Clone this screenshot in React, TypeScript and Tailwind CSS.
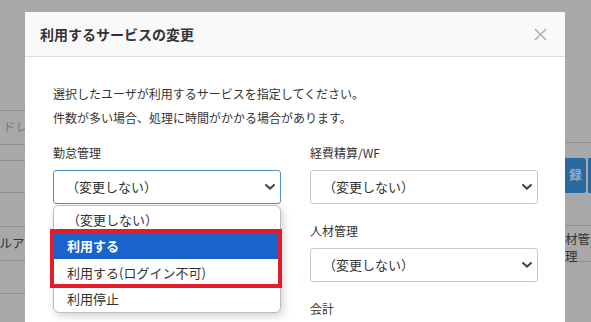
import React from "react";

const font = { fontFamily: '"Noto Sans CJK JP", "Noto Sans", sans-serif' };

function Chevron() {
  return (
    <svg width="10" height="6" viewBox="0 0 10 6" className="text-[#444]">
      <path d="M1 1l4 3.6L9 1" fill="none" stroke="currentColor" strokeWidth="2" strokeLinecap="round" />
    </svg>
  );
}

function Select({ focused = false }: { focused?: boolean }) {
  return (
    <div
      className={`flex h-[34px] items-center justify-between rounded-[3px] border bg-white pl-[12px] pr-[5px] text-[13px] text-[#333] ${
        focused ? "border-[#4e93c9]" : "border-[#c8c8c8]"
      }`}
    >
      <span>（変更しない）</span>
      <Chevron />
    </div>
  );
}

function Field({ label, focused, children }: { label: string; focused?: boolean; children?: React.ReactNode }) {
  return (
    <div className="relative">
      <div className="mb-[8px] h-[18px] text-[12px] leading-[18px] text-[#333]">{label}</div>
      <div className="relative">
        <Select focused={focused} />
        {children}
      </div>
    </div>
  );
}

function Dropdown() {
  const items = ["（変更しない）", "利用する", "利用する(ログイン不可)", "利用停止"];
  return (
    <div className="absolute left-0 right-0 top-full z-10 mt-[1px]">
      <div className="overflow-hidden rounded-[6px] border border-[#bdbdbd] bg-white shadow-[2px_3px_8px_rgba(0,0,0,0.18)]">
        {items.map((t, i) => (
          <div
            key={t}
            className={`flex h-[26.5px] items-center pl-[13px] text-[13px] ${
              i === 1 ? "bg-[#1a62cc] font-bold text-white" : "text-[#333]"
            }`}
          >
            {t}
          </div>
        ))}
      </div>
      <div className="absolute left-[-3px] top-[24px] h-[59px] w-[232px] border-[4px] border-[#e51d2b]" />
    </div>
  );
}

export default function App() {
  return (
    <div style={font} className="flex h-[322px] w-[591px] overflow-hidden bg-[#a8a8a8]">
      {/* page behind, left */}
      <div className="w-[25px] shrink-0 overflow-hidden pt-[110px] text-[12.5px]">
        <div className="flex h-[35px] items-center whitespace-nowrap border-y border-[#8e8e8e] pl-[3px] text-[#7a7a7a]">ドレ</div>
        <div className="h-[15px]" />
        <div className="h-[33px] border-y border-[#8e8e8e]" />
        <div className="h-[33px]" />
        <div className="flex h-[35px] items-center whitespace-nowrap border-y border-[#8e8e8e] text-[#333]">
          <span className="ml-[-13px]">ールア</span>
        </div>
        <div className="h-[33px] border-b border-[#8e8e8e]" />
      </div>

      {/* modal */}
      <div className="mt-[12px] w-[540px] shrink-0 bg-white">
        <div className="flex h-[45px] items-center justify-between border-b border-[#dcdcdc] bg-[#f9f9f9] pl-[15px] pr-[18px]">
          <span className="text-[14px] font-bold text-[#333]">利用するサービスの変更</span>
          <svg width="13" height="13" viewBox="0 0 13 13">
            <path d="M1 1l11 11M12 1L1 12" stroke="#b0b0b0" strokeWidth="1.6" />
          </svg>
        </div>
        <div className="pl-[28px] pr-[27px] pt-[25px]">
          <p className="text-[12px] leading-[24px] text-[#333]">選択したユーザが利用するサービスを指定してください。</p>
          <p className="text-[12px] leading-[24px] text-[#333]">件数が多い場合、処理に時間がかかる場合があります。</p>
          <div className="mt-[14px] grid grid-cols-2 gap-x-[29px] gap-y-[18px]">
            <Field label="勤怠管理" focused>
              <Dropdown />
            </Field>
            <Field label="経費精算/WF" />
            <Field label="給与計算" />
            <Field label="人材管理" />
            <div />
            <Field label="会計" />
          </div>
        </div>
      </div>

      {/* page behind, right */}
      <div className="w-[26px] shrink-0 overflow-hidden pt-[142px] text-[12.5px]">
        <div className="border-t border-[#8e8e8e] pt-[15px]">
          <div className="flex h-[35px]">
            <div className="flex w-[21px] items-center justify-center rounded-r-[3px] bg-[#2a6b9f] font-bold text-[#8eb0cc]">録</div>
            <div className="ml-[2px] w-[3px] bg-[#2a6b9f]" />
          </div>
        </div>
        <div className="mt-[32px] h-[37px] border-y border-[#8e8e8e] pt-[4px] leading-[17px] text-[#333]">
          <div className="whitespace-nowrap">材管</div>
          <div>理</div>
        </div>
      </div>
    </div>
  );
}
